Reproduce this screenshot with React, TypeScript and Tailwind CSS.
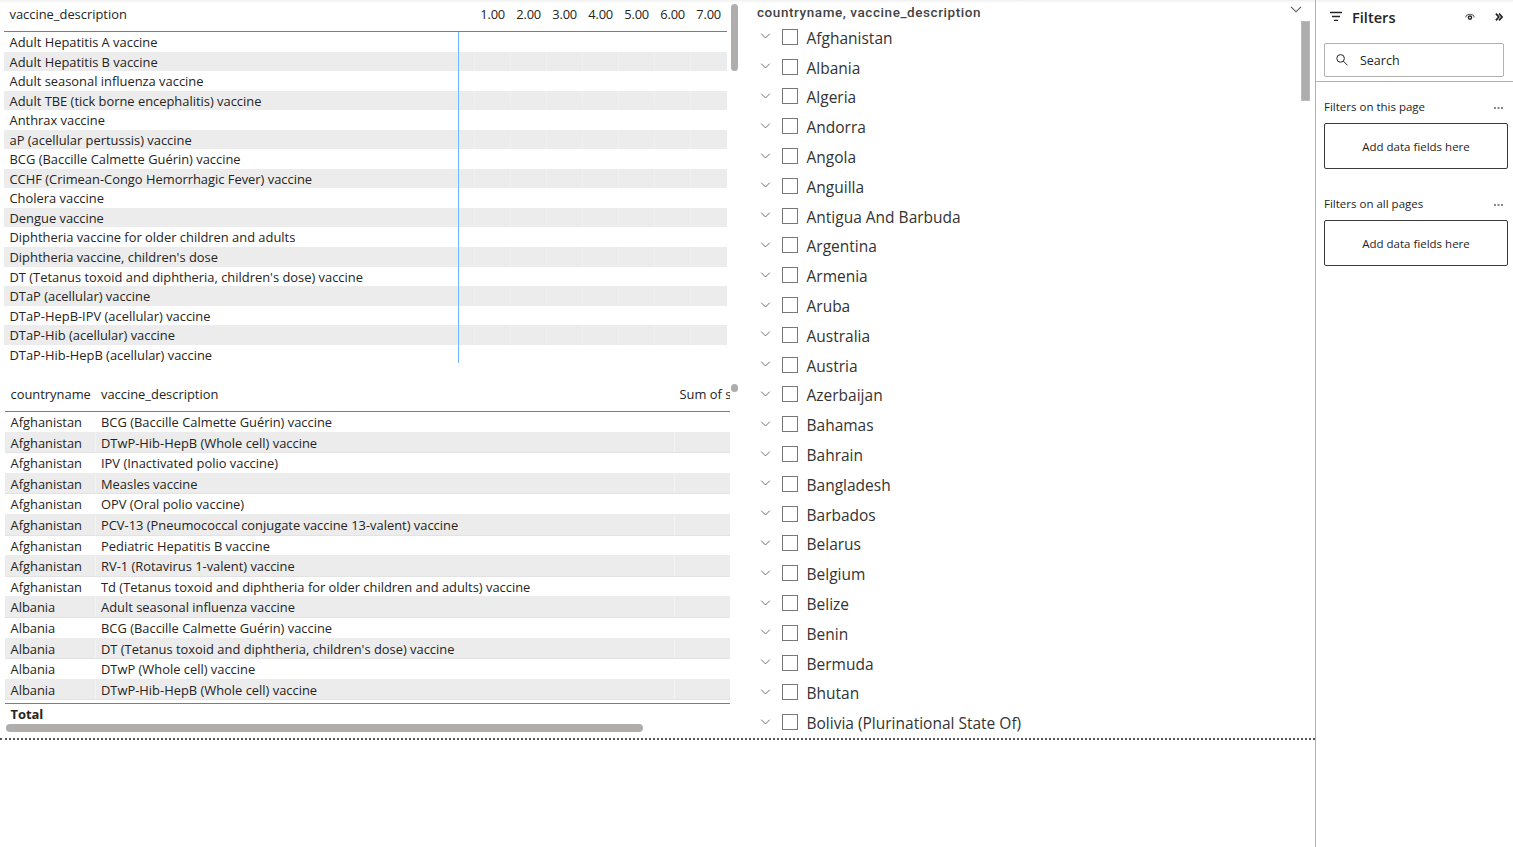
import React from "react";

const vaccines = [
  "Adult Hepatitis A vaccine",
  "Adult Hepatitis B vaccine",
  "Adult seasonal influenza vaccine",
  "Adult TBE (tick borne encephalitis) vaccine",
  "Anthrax vaccine",
  "aP (acellular pertussis) vaccine",
  "BCG (Baccille Calmette Guérin) vaccine",
  "CCHF (Crimean-Congo Hemorrhagic Fever) vaccine",
  "Cholera vaccine",
  "Dengue vaccine",
  "Diphtheria vaccine for older children and adults",
  "Diphtheria vaccine, children's dose",
  "DT (Tetanus toxoid and diphtheria, children's dose) vaccine",
  "DTaP (acellular) vaccine",
  "DTaP-HepB-IPV (acellular) vaccine",
  "DTaP-Hib (acellular) vaccine",
  "DTaP-Hib-HepB (acellular) vaccine",
];

const doses = ["1.00", "2.00", "3.00", "4.00", "5.00", "6.00", "7.00"];

const schedule: [string, string][] = [
  ["Afghanistan", "BCG (Baccille Calmette Guérin) vaccine"],
  ["Afghanistan", "DTwP-Hib-HepB (Whole cell) vaccine"],
  ["Afghanistan", "IPV (Inactivated polio vaccine)"],
  ["Afghanistan", "Measles vaccine"],
  ["Afghanistan", "OPV (Oral polio vaccine)"],
  ["Afghanistan", "PCV-13 (Pneumococcal conjugate vaccine 13-valent) vaccine"],
  ["Afghanistan", "Pediatric Hepatitis B vaccine"],
  ["Afghanistan", "RV-1 (Rotavirus 1-valent) vaccine"],
  ["Afghanistan", "Td (Tetanus toxoid and diphtheria for older children and adults) vaccine"],
  ["Albania", "Adult seasonal influenza vaccine"],
  ["Albania", "BCG (Baccille Calmette Guérin) vaccine"],
  ["Albania", "DT (Tetanus toxoid and diphtheria, children's dose) vaccine"],
  ["Albania", "DTwP (Whole cell) vaccine"],
  ["Albania", "DTwP-Hib-HepB (Whole cell) vaccine"],
];

const countries = [
  "Afghanistan", "Albania", "Algeria", "Andorra", "Angola", "Anguilla",
  "Antigua And Barbuda", "Argentina", "Armenia", "Aruba", "Australia", "Austria",
  "Azerbaijan", "Bahamas", "Bahrain", "Bangladesh", "Barbados", "Belarus",
  "Belgium", "Belize", "Benin", "Bermuda", "Bhutan", "Bolivia (Plurinational State Of)",
];

function Chevron({ className }: { className: string }) {
  return (
    <svg className={className} viewBox="0 0 12 7" fill="none" stroke="currentColor" strokeWidth="1.1">
      <path d="M1 0.8 6 5.8 11 0.8" />
    </svg>
  );
}

function DoseMatrix() {
  return (
    <section className="relative h-[363px] w-[740px] overflow-hidden pl-1">
      <div className="flex h-8 w-[723px] border-b border-[#2f90ea]">
        <div className="w-[470px] pl-[5.5px] pt-[5px] leading-[18px]">vaccine_description</div>
        {doses.map((d) => (
          <div key={d} className="w-9 pr-[5px] pt-[5px] text-right leading-[18px] tracking-[-0.2px]">{d}</div>
        ))}
      </div>
      {vaccines.map((v, i) => (
        <div key={v} className={`flex h-[19.56px] w-[723px] ${i % 2 ? "bg-[#ececec]" : ""}`}>
          <div className="w-[454px] shrink-0 whitespace-nowrap pl-[5.5px] leading-5">{v}</div>
          <div className="w-4 shrink-0 border-l border-[#6db8ff]" />
          {doses.map((d) => (
            <div key={d} className={`w-9 shrink-0 border-l ${i % 2 ? "border-[#f0f0f0]" : "border-transparent"}`} />
          ))}
        </div>
      ))}
      <div className="absolute left-[731px] top-1 h-[67px] w-[7px] rounded-full bg-[#b0aead]" />
    </section>
  );
}

function ScheduleTable() {
  return (
    <section className="relative mt-[14px] h-[361px] w-[740px] pl-[5px]">
      <div className="flex h-[35px] w-[725px] overflow-hidden whitespace-nowrap border-b border-[#2f90ea] leading-[18px]">
        <div className="w-[90px] shrink-0 pl-[5.5px] pt-2">countryname</div>
        <div className="w-[579px] shrink-0 pl-[6px] pt-2">vaccine_description</div>
        <div className="shrink-0 pl-[5.5px] pt-2">Sum of schedule</div>
      </div>
      {schedule.map(([c, v], i) => (
        <div
          key={i}
          className={`flex h-[20.6px] w-[725px] whitespace-nowrap border-b leading-[21px] ${i % 2 ? "border-[#e3e3e3] bg-[#ececec]" : "border-[#ececec]"}`}
        >
          <div className="w-[90px] shrink-0 pl-[5.5px]">{c}</div>
          <div className={`w-[579px] shrink-0 border-l pl-[5px] ${i % 2 ? "border-[#f3f3f3]" : "border-transparent"}`}>{v}</div>
          <div className={`w-[56px] border-l ${i % 2 ? "border-[#f3f3f3]" : "border-transparent"}`} />
        </div>
      ))}
      <div className="mt-[2.6px] w-[725px] border-t border-[#2f90ea] pl-[5.5px] pt-px text-[13px] font-bold leading-[18px] tracking-[-0.1px]">Total</div>
      <div className="absolute left-[731px] top-[7px] h-2 w-[7px] rounded-full bg-[#b0aead]" />
      <div className="absolute left-[6px] top-[347px] h-2 w-[637px] rounded-full bg-[#b0aead]" />
    </section>
  );
}

function CountrySlicer() {
  return (
    <section className="relative flex-1 pl-[17px]">
      <div className="flex h-[23px] justify-between pr-[13px]">
        <div className="pt-[3px] font-['Roboto',sans-serif] text-[13.5px] font-medium leading-[18px] tracking-[0.57px] text-[#444]">
          countryname, vaccine_description
        </div>
        <Chevron className="mt-[6px] h-[7px] w-3 text-[#555]" />
      </div>
      <ul className="text-[15.5px] text-[#333]">
        {countries.map((c) => (
          <li key={c} className="flex h-[29.8px] items-center">
            <Chevron className="mb-[3px] ml-[3px] h-[6px] w-[11px] text-[#666]" />
            <span className="mb-[2px] ml-[11px] size-4 border border-[#777]" />
            <span className="ml-[8.5px] leading-[22px]">{c}</span>
          </li>
        ))}
      </ul>
      <div className="absolute left-[561px] top-[21px] h-20 w-[9px] border border-[#bcbcbc] bg-[#adadad]" />
    </section>
  );
}

function FilterGroup({ title }: { title: string }) {
  return (
    <div className="h-[97px]">
      <div className="flex h-[26px] items-start justify-between pr-[10px] leading-[18px]">
        <span className="pt-px">{title}</span>
        <svg viewBox="0 0 9 2" className="mt-[10px] h-[2px] w-[9px]" fill="#8a8886">
          <rect x="0" width="2" height="2" />
          <rect x="3.5" width="2" height="2" />
          <rect x="7" width="2" height="2" />
        </svg>
      </div>
      <div className="flex h-[46px] w-[184px] items-center justify-center rounded-[2px] border border-[#3b3a39] pt-[2px]">
        Add data fields here
      </div>
    </div>
  );
}

function FiltersPane() {
  return (
    <aside className="w-[198px] shrink-0 border-l border-[#b3b0ad] text-[11.5px] text-[#252423]">
      <div className="h-[82px] border-b border-[#b3b0ad] pl-2">
        <div className="flex h-[43px] items-start pl-[5px]">
          <svg viewBox="0 0 14 10" className="mt-[11px] h-[10px] w-[14px]" fill="none" stroke="#252423" strokeWidth="1.3">
            <path d="M1 1.5H13M3 5.5H11M5 9.3H9" />
          </svg>
          <h2 className="ml-[9px] w-[113px] pt-[7px] text-[14.6px] font-semibold leading-5">Filters</h2>
          <svg viewBox="0 0 10 8" className="mt-[13px] h-2 w-[10px]" fill="none" stroke="#666" strokeWidth="1.1">
            <path d="M0.7 4.5C1.5 0.2 8.5 0.2 9.3 4.5" />
            <circle cx="5" cy="4.6" r="1.6" stroke="#252423" strokeWidth="1.4" />
          </svg>
          <svg viewBox="0 0 8 8" className="ml-5 mt-[13px] h-2 w-2" fill="none" stroke="#252423" strokeWidth="1.7">
            <path d="M0.9 0.6 3.8 4 0.9 7.4M4 0.6 7 4 4 7.4" />
          </svg>
        </div>
        <div className="flex h-[34px] w-[180px] items-center rounded-[2px] border border-[#b3b0ad] pl-[11px] text-[12.5px]">
          <svg viewBox="0 0 12 12" className="mb-px size-3" fill="none" stroke="#252423" strokeWidth="1">
            <circle cx="4.6" cy="4.4" r="3.8" />
            <path d="M7.4 7.2 11.6 11.4" />
          </svg>
          <span className="ml-3 pt-[2px]">Search</span>
        </div>
      </div>
      <div className="pl-2 pt-[15px]">
        <FilterGroup title="Filters on this page" />
        <FilterGroup title="Filters on all pages" />
      </div>
    </aside>
  );
}

export default function App() {
  return (
    <div className="flex h-[847px] w-[1513px] overflow-hidden bg-white bg-linear-to-b from-[#f0f0f0] from-[0px] to-white to-[3px] font-['Open_Sans','Noto_Sans',sans-serif] text-[12.9px] text-[#252423]">
      <main className="w-[1315px] shrink-0">
        <div className="flex h-[738px]">
          <div className="w-[740px] shrink-0">
            <DoseMatrix />
            <ScheduleTable />
          </div>
          <CountrySlicer />
        </div>
        <div className="border-t-2 border-dotted border-[#555]" />
      </main>
      <FiltersPane />
    </div>
  );
}
